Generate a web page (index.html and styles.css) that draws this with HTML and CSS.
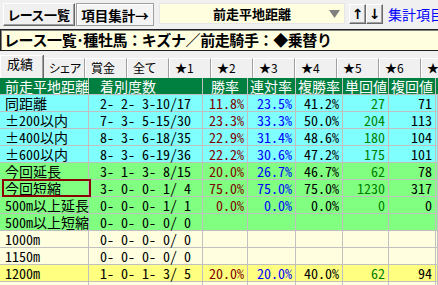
FILE: index.html
```html
<!DOCTYPE html>
<html lang="ja">
    <head>
        <meta charset="utf-8">
        <link rel="stylesheet" href="styles.css">
    </head>
    <body>

        <div class="toolbar">
            <button class="btn">レース一覧</button>
            <button class="btn btn_on">項目集計→</button>
            <div class="combo">
                <span class="combo_text">前走平地距離</span>
                <svg class="combo_arrow" width="11" height="8" viewBox="0 0 11 8"><polygon points="0,0 11,0 5.5,8" fill="#808080"/></svg>
            </div>
            <div class="arrows">
                <button class="arrow">↑</button><button class="arrow">↓</button>
            </div>
            <a class="link">集計項目ナビ</a>
        </div>

        <div class="title">レース一覧･種牡馬：キズナ／前走騎手：◆乗替り</div>

        <div class="tabs">
            <div class="tab tab_sel">成績</div>
            <div class="tab">シェア</div>
            <div class="tab">賞金</div>
            <div class="tab">全て</div>
            <div class="tab">★1</div>
            <div class="tab">★2</div>
            <div class="tab">★3</div>
            <div class="tab">★4</div>
            <div class="tab">★5</div>
            <div class="tab">★6</div>
            <div class="tab">★7</div>
        </div>

        <div class="grid">
            <div class="row head">
                <div class="c c1">前走平地距離</div><div class="c c2">着別度数</div><div class="c c3">勝率</div><div class="c">連対率</div><div class="c">複勝率</div><div class="c">単回値</div><div class="c">複回値</div><div class="c"></div>
            </div>
            <div class="row cyan">
                <div class="c c1">同距離</div><div class="c c2">2- 2- 3-10/17</div><div class="c r win">11.8%</div><div class="c r ren">23.5%</div><div class="c r">41.2%</div><div class="c r tan">27</div><div class="c r">71</div><div class="c"></div>
            </div>
            <div class="row cyan">
                <div class="c c1">±200以内</div><div class="c c2">7- 3- 5-15/30</div><div class="c r win">23.3%</div><div class="c r ren">33.3%</div><div class="c r">50.0%</div><div class="c r tan">204</div><div class="c r">113</div><div class="c"></div>
            </div>
            <div class="row cyan">
                <div class="c c1">±400以内</div><div class="c c2">8- 3- 6-18/35</div><div class="c r win">22.9%</div><div class="c r ren">31.4%</div><div class="c r">48.6%</div><div class="c r tan">180</div><div class="c r">104</div><div class="c"></div>
            </div>
            <div class="row cyan">
                <div class="c c1">±600以内</div><div class="c c2">8- 3- 6-19/36</div><div class="c r win">22.2%</div><div class="c r ren">30.6%</div><div class="c r">47.2%</div><div class="c r tan">175</div><div class="c r">101</div><div class="c"></div>
            </div>
            <div class="row green">
                <div class="c c1">今回延長</div><div class="c c2">3- 1- 3- 8/15</div><div class="c r win">20.0%</div><div class="c r ren">26.7%</div><div class="c r">46.7%</div><div class="c r tan">62</div><div class="c r">78</div><div class="c"></div>
            </div>
            <div class="row green">
                <div class="c c1 focus">今回短縮</div><div class="c c2">3- 0- 0- 1/ 4</div><div class="c r win">75.0%</div><div class="c r ren">75.0%</div><div class="c r">75.0%</div><div class="c r tan">1230</div><div class="c r">317</div><div class="c"></div>
            </div>
            <div class="row green">
                <div class="c c1">500m以上延長</div><div class="c c2">0- 0- 0- 1/ 1</div><div class="c r win">0.0%</div><div class="c r ren">0.0%</div><div class="c r">0.0%</div><div class="c r tan">0</div><div class="c r">0</div><div class="c"></div>
            </div>
            <div class="row green">
                <div class="c c1">500m以上短縮</div><div class="c c2">0- 0- 0- 0/ 0</div><div class="c"></div><div class="c"></div><div class="c"></div><div class="c"></div><div class="c"></div><div class="c"></div>
            </div>
            <div class="row pale">
                <div class="c c1">1000m</div><div class="c c2">0- 0- 0- 0/ 0</div><div class="c"></div><div class="c"></div><div class="c"></div><div class="c"></div><div class="c"></div><div class="c"></div>
            </div>
            <div class="row pale">
                <div class="c c1">1150m</div><div class="c c2">0- 0- 0- 0/ 0</div><div class="c"></div><div class="c"></div><div class="c"></div><div class="c"></div><div class="c"></div><div class="c"></div>
            </div>
            <div class="row yellow">
                <div class="c c1">1200m</div><div class="c c2">1- 0- 1- 3/ 5</div><div class="c r win">20.0%</div><div class="c r ren">20.0%</div><div class="c r">40.0%</div><div class="c r tan">62</div><div class="c r">94</div><div class="c"></div>
            </div>
            <div class="row pale">
                <div class="c c1">1400m</div><div class="c c2">0- 0- 0- 0/ 0</div><div class="c"></div><div class="c"></div><div class="c"></div><div class="c"></div><div class="c"></div><div class="c"></div>
            </div>
        </div>

    </body>
</html>
```

FILE: styles.css
```css
body{
    margin: 0;
    background-color: #f0f0f0;
    font-family: "Noto Sans CJK JP", sans-serif;
    overflow: hidden;
    width: 438px;
    height: 285px;
}

.toolbar{
    display: flex;
    align-items: flex-start;
    height: 29px;
    padding: 3px 0 0 3px;
    box-sizing: border-box;
    white-space: nowrap;
    overflow: hidden;
}

.btn{
    flex: none;
    height: 23px;
    padding: 0;
    margin: 0;
    width: 72px;
    font-family: "Noto Sans CJK JP", sans-serif;
    font-weight: bold;
    font-size: 13px;
    line-height: 20px;
    color: #000;
    background-color: #f0f0f0;
    border: 1px solid;
    border-color: #fff #696969 #696969 #fff;
    box-shadow: inset -1px -1px #a0a0a0;
    font-feature-settings: "palt";
    white-space: nowrap;
}

.btn_on{
    margin-left: 1px;
    width: 78px;
    font-size: 13.5px;
    border-color: #a0a0a0;
    box-shadow: inset 1px 1px #fff;
    background-color: #f4f4f4;
    font-feature-settings: normal;
}

.combo{
    flex: none;
    margin-left: 5px;
    width: 186px;
    height: 21px;
    background-color: #ffffe0;
    border: 1px solid #e6e6e6;
    box-sizing: border-box;
    display: flex;
    align-items: center;
    justify-content: center;
    position: relative;
}

.combo_text{
    font-weight: bold;
    font-size: 13px;
    line-height: 16px;
}

.combo_arrow{
    position: absolute;
    right: 4px;
    top: 6px;
}

.arrows{
    flex: none;
    display: flex;
    margin-left: 4px;
    margin-top: 1px;
}

.arrow{
    width: 17px;
    height: 20px;
    padding: 0;
    margin: 0;
    font-family: "DejaVu Sans", sans-serif;
    font-weight: bold;
    font-size: 14px;
    line-height: 16px;
    background-color: #f0f0f0;
    border: 1px solid;
    border-color: #fff #696969 #696969 #fff;
    box-shadow: inset -1px -1px #a0a0a0;
}

.link{
    margin-left: 5px;
    margin-top: 2px;
    color: #0000ff;
    font-size: 14px;
    line-height: 18px;
}

.title{
    height: 22px;
    box-sizing: border-box;
    background-color: #ffffe0;
    border: 1px solid #202020;
    border-right: none;
    box-shadow: inset 1px 1px #808080;
    font-weight: bold;
    font-size: 15px;
    line-height: 19px;
    padding-left: 3px;
    white-space: nowrap;
    letter-spacing: -0.4px;
}

.tabs{
    display: flex;
    height: 27px;
    padding-top: 7px;
    box-sizing: border-box;
    align-items: flex-end;
    overflow: hidden;
}

.tab{
    flex: 0 0 42px;
    height: 20px;
    box-sizing: border-box;
    border-top: 1px solid #fff;
    border-left: 1px solid #fff;
    border-right: 1px solid #a0a0a0;
    box-shadow: 1px 0 #696969;
    font-size: 12px;
    line-height: 17px;
    padding-left: 5px;
    white-space: nowrap;
    font-feature-settings: "palt";
}

.tab_sel{
    flex-basis: 43px;
    height: 23px;
    line-height: 16px;
    padding-left: 6px;
    font-size: 13px;
    position: relative;
    z-index: 1;
}

.grid{
    font-family: "Noto Sans Mono CJK JP", "Noto Sans CJK JP", monospace;
    font-size: 14px;
    overflow: hidden;
}

.row{
    display: grid;
    grid-template-columns: 89px 114px 45px 48px 47px 46px 47px 1fr;
    height: 17px;
}

.c{
    box-sizing: border-box;
    border-right: 1px solid #c0c0c0;
    border-bottom: 1px solid #c0c0c0;
    line-height: 16px;
    white-space: pre;
}

.c1{
    padding-left: 5px;
}

.c2{
    padding-left: 11px;
}

.r{
    text-align: right;
    padding-right: 3px;
}

.head{
    background-color: #008040;
    color: #fff;
}

.head .c{
    padding-left: 2px;
}

.head .c1{
    padding-left: 5px;
}

.head .c2{
    padding-left: 11px;
}

.head .c3{
    padding-left: 8px;
}

.cyan{
    background-color: #80ffff;
}

.green{
    background-color: #80ff80;
}

.pale{
    background-color: #ffffe0;
}

.yellow{
    background-color: #ffff80;
}

.win{
    color: #800000;
}

.ren{
    color: #0000ff;
}

.tan{
    color: #008000;
}

.focus{
    position: relative;
}

.focus::after{
    content: "";
    position: absolute;
    left: 2px;
    top: -1px;
    width: 89px;
    height: 18px;
    box-sizing: border-box;
    border: 2px solid #8b0000;
}
```
